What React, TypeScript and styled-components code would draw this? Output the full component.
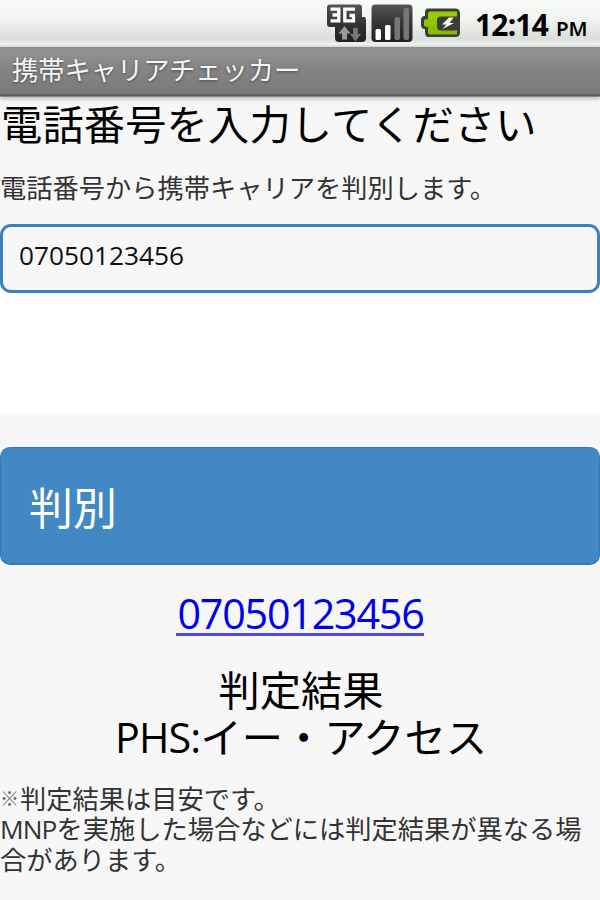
import React from "react";
import styled, { createGlobalStyle } from "styled-components";

const Global = createGlobalStyle`
  * { box-sizing: border-box; }
  html, body { margin: 0; padding: 0; }
  body { width: 600px; height: 900px; overflow: hidden; background: #f7f7f7; }
`;

const Screen = styled.div`
  display: flex;
  flex-direction: column;
  width: 600px;
  height: 900px;
  overflow: hidden;
  background: #f7f7f7;
  color: #000;
  font-family: "Open Sans", "Noto Sans CJK JP", sans-serif;
`;

const StatusBar = styled.header`
  flex: none;
  display: flex;
  align-items: flex-start;
  justify-content: flex-end;
  height: 47px;
  background: linear-gradient(#f8faf8 0, #f3f5f3 18px, #dcdedc 38px, #dfe3df 41px, #f4f7f4 44px, #eff2ef 47px);
`;

const StatusIcons = styled.svg`
  display: block;
  width: 150px;
  height: 47px;
`;

const Clock = styled.div`
  display: flex;
  align-items: baseline;
  width: 130px;
  padding-left: 5px;
  font-family: "Noto Sans", "Open Sans", sans-serif;
  font-weight: 700;
  font-size: 30px;
  line-height: 50px;
  letter-spacing: -0.8px;
  white-space: nowrap;
`;

const Meridiem = styled.span`
  margin-left: 8px;
  font-size: 20.5px;
  font-weight: 600;
  letter-spacing: -0.2px;
`;

const TitleBar = styled.div`
  flex: none;
  height: 50px;
  padding-left: 12px;
  background: linear-gradient(#8b8b8b 0, #939393 3px, #858585 20px, #7a7a7a 47px, #505050 48px, #6a6a6a 49px, #a8a8a8 50px);
  box-shadow: 0 1px 5px rgba(0, 0, 0, 0.34);
  color: #f5f5f5;
  font-size: 26.25px;
  line-height: 46px;
  text-shadow: 0 1px 3px rgba(0, 0, 0, 0.45);
  white-space: nowrap;
`;

const Heading = styled.h1`
  flex: none;
  margin: 0;
  padding-left: 1px;
  height: 57px;
  font-size: 41.25px;
  font-weight: 400;
  line-height: 55px;
  letter-spacing: 0.15px;
  white-space: nowrap;
`;

const Description = styled.p`
  flex: none;
  margin: 0;
  height: 70px;
  color: #333;
  font-size: 26.25px;
  line-height: 69px;
  white-space: nowrap;
`;

const InputArea = styled.div`
  flex: none;
  height: 190px;
  background: linear-gradient(#f7f7f7 0, #f7f7f7 60px, #fff 60px);
`;

const NumberInput = styled.input`
  display: block;
  width: 600px;
  height: 69px;
  margin: 0;
  padding: 0 16px 7px;
  border: 3.5px solid #3c80bd;
  border-radius: 11px;
  outline: 0;
  background: #f7f7f7;
  color: #111;
  font: 400 26.25px "Open Sans", sans-serif;
`;

const SubmitButton = styled.button`
  flex: none;
  width: 600px;
  height: 118px;
  margin: 33px 0 0;
  padding: 0 0 0 28px;
  border: 1px solid #3878b5;
  border-width: 1px 1px 2px;
  border-radius: 10px;
  background: #4188c4;
  color: #fff;
  font: 400 44px/116px "Noto Sans CJK JP", sans-serif;
  text-align: left;
`;

const Result = styled.section`
  flex: none;
  display: flex;
  flex-direction: column;
  align-items: center;
  font-size: 41.25px;
  line-height: 47px;
`;

const PhoneLink = styled.a`
  height: 47px;
  margin: 24px 0 31px;
  padding-left: 1px;
  border-bottom: 3px solid #4b4bf0;
  color: #0000f0;
  line-height: 49px;
  letter-spacing: -1.2px;
  text-decoration: none;
`;

const ResultLine = styled.div`
  display: flex;
  align-items: baseline;
  height: 47px;
  padding-left: 2px;
  white-space: nowrap;
`;

const Latin = styled.span`
  letter-spacing: -0.8px;
`;

const Note = styled.p`
  flex: none;
  margin: 23px 0 0;
  color: #333;
  font-size: 26.25px;
  line-height: 30px;
  white-space: nowrap;
`;

const NoteLine = styled.span`
  display: block;
  height: 30.4px;
`;

const NoteLatin = styled.span`
  letter-spacing: -0.9px;
`;

const NoteMark = styled.span`
  display: inline-block;
  width: 20px;
  height: 30px;
  color: #666;
  font-size: 19px;
  vertical-align: top;
`;

function Indicators() {
  return (
    <StatusIcons viewBox="320 0 150 47">
      <defs>
        <linearGradient id="panel" x1="0" y1="0" x2="0" y2="1">
          <stop offset="0" stopColor="#555" />
          <stop offset="0.5" stopColor="#343434" />
          <stop offset="1" stopColor="#202020" />
        </linearGradient>
        <linearGradient id="cell" x1="0" y1="0" x2="0" y2="1">
          <stop offset="0" stopColor="#9bd000" />
          <stop offset="1" stopColor="#83b900" />
        </linearGradient>
      </defs>
      <path d="M330 4.5h29q3 0 3 3V17h2q2 0 2 3v18q0 4-4 4h-23q-4 0-4-4V27h-5q-3 0-3-3V7.500q0-3 3-3z" fill="url(#panel)" />
      <path d="M330.500 9.200h8.300v11.600h-8.300M332.500 15h6M355 9.200h-10.200v11.600h8.700v-5.300h-4" fill="none" stroke="#fff" strokeWidth="3.300" />
      <path d="M344.500 26l6 7.500h-3.500v6h-5v-6h-3.500z" fill="#999" />
      <path d="M355.500 41.500l5.500-7.500h-3.200v-6h-4.600v6H350z" fill="#777" />
      <rect x="371.500" y="4.500" width="41" height="37.500" rx="4" fill="url(#panel)" />
      <rect x="375.500" y="29" width="5.500" height="11" rx="1.500" fill="#fff" />
      <rect x="385" y="25" width="5.500" height="15" rx="1.500" fill="#fff" />
      <rect x="394.500" y="17" width="5.500" height="23" rx="2" fill="#777" />
      <rect x="403.500" y="8" width="5.500" height="32" rx="2" fill="#777" />
      <path d="M428 8.500h27q5 0 5 5v19q0 4.500-5 4.500h-27q-3 0-3-5v-3q-4 0-4-4v-5q0-4 4-4v-2.500q0-5 3-5z" fill="#3c3c38" />
      <path d="M430 11.500h27V16.500h-16q-4 0-4 4v6q0 4 4 4h16v4h-27q-2 0-2-3V27q-4 0-4-2v-4q0-2 4-2v-4.500q0-3 2-3z" fill="url(#cell)" />
      <path d="M449 17.500l-7 7h4.500l-4 4.500 11.500-6h-4.500l4-5.500z" fill="#fff" />
    </StatusIcons>
  );
}

export default function App() {
  return (
    <>
      <Global />
      <Screen>
        <StatusBar>
          <Indicators />
          <Clock>12:14<Meridiem>PM</Meridiem></Clock>
        </StatusBar>
        <TitleBar>携帯キャリアチェッカー</TitleBar>
        <Heading>電話番号を入力してください</Heading>
        <Description>電話番号から携帯キャリアを判別します。</Description>
        <InputArea>
          <NumberInput type="tel" defaultValue="07050123456" />
        </InputArea>
        <SubmitButton type="button">判別</SubmitButton>
        <Result>
          <PhoneLink href="tel:07050123456">07050123456</PhoneLink>
          <ResultLine>判定結果</ResultLine>
          <ResultLine><Latin>PHS:</Latin>イー・アクセス</ResultLine>
        </Result>
        <Note>
          <NoteLine><NoteMark>※</NoteMark>判定結果は目安です。</NoteLine>
          <NoteLine><NoteLatin>MNP</NoteLatin>を実施した場合などには判定結果が異なる場</NoteLine>
          <NoteLine>合があります。</NoteLine>
        </Note>
      </Screen>
    </>
  );
}
